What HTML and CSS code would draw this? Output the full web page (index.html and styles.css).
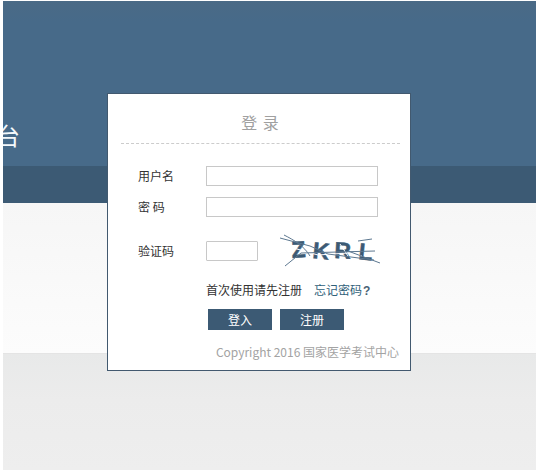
FILE: index.html
```html
<!DOCTYPE html>
<html lang="zh-CN">
<head>
<meta charset="utf-8">
<title>登录</title>
<link rel="stylesheet" href="styles.css">
</head>
<body>
<div class="page">
  <header class="hero">
    <div class="hero-title">台</div>
  </header>
  <div class="strip"></div>
  <div class="light"></div>
  <div class="grey"></div>
  <main class="card">
    <h1 class="card-title">登 录</h1>
    <form class="form">
      <div class="row row-user">
        <label class="label">用户名</label>
        <input class="input" type="text">
      </div>
      <div class="row row-pass">
        <label class="label">密 码</label>
        <input class="input" type="password">
      </div>
      <div class="row row-code">
        <label class="label">验证码</label>
        <input class="input input-code" type="text">
        <svg class="captcha" width="104" height="36" viewBox="0 0 104 36">
          <text class="cap-text" x="14" y="24" transform="rotate(-4 14 24)">Z</text>
          <text class="cap-text" x="34" y="24" transform="rotate(6 34 24)">K</text>
          <text class="cap-text" x="56" y="24" transform="rotate(3 56 24)">R</text>
          <text class="cap-text" x="80" y="25" transform="rotate(6 80 25)">L</text>
          <g class="cap-cuts">
            <path d="M12 13 L40 21 L70 19 L84 22"/>
            <path d="M62 10 L70 22"/>
          </g>
          <g class="cap-lines">
            <path d="M2 4 L32 12 L50 20 L96 26"/>
            <path d="M6 1 C 16 6 26 12 32 22"/>
            <path d="M7 32 L23 19 L97 17"/>
            <path d="M70 17 L102 29"/>
            <path d="M80 7 L94 5"/>
          </g>
        </svg>
      </div>
      <div class="links">
        <span>首次使用请先注册</span>
        <a class="forgot" href="#">忘记密码<b>?</b></a>
      </div>
      <div class="actions">
        <button class="btn btn-login" type="button">登入</button>
        <button class="btn btn-reg" type="button">注册</button>
      </div>
    </form>
    <p class="copy">Copyright 2016 国家医学考试中心</p>
  </main>
</div>
</body>
</html>
```
FILE: styles.css
```css
html, body {
  margin: 0;
  padding: 0;
  background: #fff;
}
body {
  font-family: "Noto Sans CJK SC", "Liberation Sans", sans-serif;
  font-size: 12px;
  color: #333;
}
.page {
  position: relative;
  width: 533px;
  height: 469px;
  margin: 1px 0 0 3px;
  display: flex;
  flex-direction: column;
  overflow: hidden;
}
.hero {
  height: 165px;
  background: linear-gradient(#4a6a86 0, #476a89 12%, #476a89 100%);
  position: relative;
  overflow: hidden;
  flex: none;
}
.hero-title {
  margin-top: 118px;
  margin-left: -7px;
  font-size: 24px;
  line-height: 32px;
  color: #f4f8fb;
}
.strip {
  height: 37px;
  background: #3c5a74;
  flex: none;
}
.light {
  height: 151px;
  background: linear-gradient(#f6f6f6, #fcfcfc);
  border-bottom: 1px solid #e4e4e4;
  box-sizing: border-box;
  flex: none;
}
.grey {
  flex: 1;
  background: linear-gradient(#e8e9e9, #ececec 40%, #eeeeee);
}
.card {
  position: absolute;
  left: 104px;
  top: 92px;
  width: 304px;
  height: 278px;
  box-sizing: border-box;
  background: #fff;
  border: 1px solid #42596f;
  display: flex;
  flex-direction: column;
  align-items: stretch;
}
.card-title {
  margin: 17px 10px 0 13px;
  height: 32px;
  font-size: 16px;
  font-weight: normal;
  line-height: 22px;
  color: #a0a0a0;
  text-align: center;
  border-bottom: 1px dashed #ccc;
  letter-spacing: 1px;
}
.form {
  display: flex;
  flex-direction: column;
}
.row {
  display: flex;
  align-items: center;
  padding-left: 30px;
}
.row-user { margin-top: 22px; }
.row-pass { margin-top: 11px; }
.row-code { margin-top: 16px; height: 36px; }
.label {
  width: 68px;
  flex: none;
  font-size: 12px;
  line-height: 20px;
  color: #333;
}
.input {
  width: 172px;
  height: 20px;
  box-sizing: border-box;
  margin: 0;
  padding: 0 4px;
  background: #fff;
  border: 1px solid #c8c8c8;
  outline: none;
}
.input-code {
  width: 52px;
  border-radius: 1px;
}
.captcha {
  margin-left: 20px;
  margin-top: 2px;
  flex: none;
}
.cap-lines path {
  fill: none;
  stroke: #5d7890;
  stroke-width: 1;
}
.cap-cuts path {
  fill: none;
  stroke: #fff;
  stroke-width: 1;
}
.cap-text {
  font-family: "Liberation Sans", sans-serif;
  font-size: 23px;
  font-weight: bold;
  fill: #3c5a74;
  stroke: #3c5a74;
  stroke-width: 0.5;
}
.links {
  margin-top: 12px;
  padding-left: 98px;
  display: flex;
  line-height: 18px;
  font-size: 12px;
  color: #333;
}
.forgot {
  margin-left: 12px;
  color: #2f6079;
  text-decoration: none;
}
.forgot b {
  font-family: "Liberation Sans", sans-serif;
  color: #4a6275;
  margin-left: 1px;
}
.actions {
  margin-top: 9px;
  padding-left: 100px;
  display: flex;
  gap: 8px;
}
.btn {
  height: 21px;
  padding: 0;
  border: 0;
  background: #3c5a74;
  color: #fff;
  font-family: inherit;
  font-size: 12px;
  line-height: 21px;
}
.btn-login { width: 64px; }
.btn-reg { width: 64px; }
.copy {
  margin: 14px 11px 0 0;
  line-height: 16px;
  font-size: 12px;
  color: #a3a3a3;
  text-align: right;
}
```
